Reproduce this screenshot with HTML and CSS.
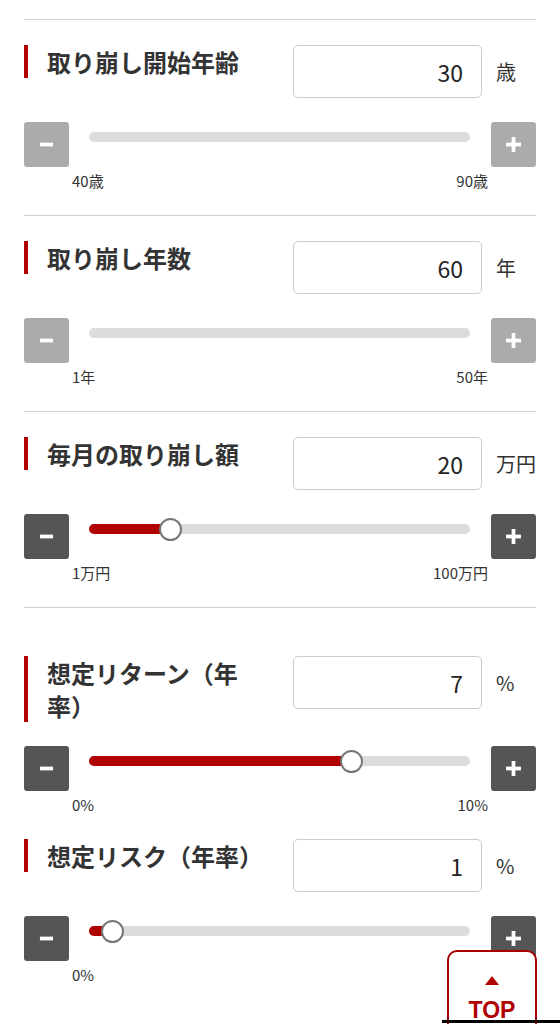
FILE: index.html
```html
<!DOCTYPE html>
<html lang="ja">
<head>
  <meta charset="UTF-8">
  <meta name="viewport" content="width=device-width, initial-scale=1.0">
  <title>取り崩しシミュレーション</title>
  <link rel="stylesheet" href="styles.css">
</head>
<body>
  <main class="sim">
    <div class="group">
      <section class="field">
        <div class="field-head">
          <h3 class="field-title">取り崩し開始年齢</h3>
          <input class="num" type="text" value="30" readonly>
          <span class="unit">歳</span>
        </div>
        <div class="slider">
          <button class="step" disabled><svg viewBox="0 0 16 16"><rect x="1" y="6" width="14" height="4"/></svg></button>
          <div class="track"></div>
          <button class="step" disabled><svg viewBox="0 0 16 16"><rect x="0" y="6" width="16" height="4"/><rect x="6" y="0" width="4" height="16"/></svg></button>
        </div>
        <div class="range-labels"><span>40歳</span><span>90歳</span></div>
      </section>

      <section class="field">
        <div class="field-head">
          <h3 class="field-title">取り崩し年数</h3>
          <input class="num" type="text" value="60" readonly>
          <span class="unit">年</span>
        </div>
        <div class="slider">
          <button class="step" disabled><svg viewBox="0 0 16 16"><rect x="1" y="6" width="14" height="4"/></svg></button>
          <div class="track"></div>
          <button class="step" disabled><svg viewBox="0 0 16 16"><rect x="0" y="6" width="16" height="4"/><rect x="6" y="0" width="4" height="16"/></svg></button>
        </div>
        <div class="range-labels"><span>1年</span><span>50年</span></div>
      </section>

      <section class="field">
        <div class="field-head">
          <h3 class="field-title">毎月の取り崩し額</h3>
          <input class="num" type="text" value="20" readonly>
          <span class="unit">万円</span>
        </div>
        <div class="slider">
          <button class="step"><svg viewBox="0 0 16 16"><rect x="1" y="6" width="14" height="4"/></svg></button>
          <div class="track">
            <div class="fill" style="width: 21.3%"></div>
            <span class="thumb" style="left: 21.3%"></span>
          </div>
          <button class="step"><svg viewBox="0 0 16 16"><rect x="0" y="6" width="16" height="4"/><rect x="6" y="0" width="4" height="16"/></svg></button>
        </div>
        <div class="range-labels"><span>1万円</span><span>100万円</span></div>
      </section>
    </div>

    <div class="group group-plain">
      <section class="field">
        <div class="field-head">
          <h3 class="field-title">想定リターン（年率）</h3>
          <input class="num" type="text" value="7" readonly>
          <span class="unit">%</span>
        </div>
        <div class="slider">
          <button class="step"><svg viewBox="0 0 16 16"><rect x="1" y="6" width="14" height="4"/></svg></button>
          <div class="track">
            <div class="fill" style="width: 68.8%"></div>
            <span class="thumb" style="left: 68.8%"></span>
          </div>
          <button class="step"><svg viewBox="0 0 16 16"><rect x="0" y="6" width="16" height="4"/><rect x="6" y="0" width="4" height="16"/></svg></button>
        </div>
        <div class="range-labels"><span>0%</span><span>10%</span></div>
      </section>

      <section class="field">
        <div class="field-head">
          <h3 class="field-title">想定リスク（年率）</h3>
          <input class="num" type="text" value="1" readonly>
          <span class="unit">%</span>
        </div>
        <div class="slider">
          <button class="step"><svg viewBox="0 0 16 16"><rect x="1" y="6" width="14" height="4"/></svg></button>
          <div class="track">
            <div class="fill" style="width: 6.1%"></div>
            <span class="thumb" style="left: 6.1%"></span>
          </div>
          <button class="step"><svg viewBox="0 0 16 16"><rect x="0" y="6" width="16" height="4"/><rect x="6" y="0" width="4" height="16"/></svg></button>
        </div>
        <div class="range-labels"><span>0%</span><span>30%</span></div>
      </section>
    </div>
  </main>

  <a class="to-top" href="#"><span class="to-top-arrow"></span>TOP</a>
  <div class="bottom-bar"></div>
</body>
</html>
```

FILE: styles.css
```css
body {
  font-family: "Noto Sans CJK JP", "Noto Sans", sans-serif;
  margin: 0;
  padding: 0;
  background-color: #fff;
  color: #333;
}
.sim {
  padding: 19px 24px 0;
}
.group {
  border-top: 1px solid #cfcfcf;
}
.group-plain {
  border-top: none;
  margin-top: 48px;
}
.field {
  padding: 25px 0 24px;
  border-bottom: 1px solid #cfcfcf;
}
.group-plain .field {
  padding-top: 0;
  border-bottom: none;
}
.field-head {
  display: flex;
  align-items: flex-start;
}
.field-title {
  flex: 1;
  margin: 0;
  padding: 0 20px 0 19px;
  border-left: 4px solid #b00000;
  font-size: 24px;
  line-height: 33px;
  font-weight: bold;
  color: #333;
}
.num {
  width: 189px;
  height: 53px;
  box-sizing: border-box;
  border: 1px solid #cccccc;
  border-radius: 5px;
  padding: 0 18px 0 10px;
  text-align: right;
  font-family: "Noto Sans CJK JP", sans-serif;
  font-size: 23px;
  color: #222;
  background: #fff;
}
.unit {
  width: 54px;
  box-sizing: border-box;
  padding-left: 14px;
  line-height: 53px;
  font-size: 20px;
  color: #333;
}
.slider {
  display: flex;
  align-items: flex-start;
  margin-top: 24px;
}
.step {
  width: 45px;
  height: 45px;
  padding: 0;
  border: none;
  border-radius: 3px;
  background: #555;
  display: flex;
  align-items: center;
  justify-content: center;
}
.step:disabled {
  background: #ababab;
}
.step svg {
  width: 15px;
  height: 15px;
  fill: #fff;
}
.track {
  flex: 1;
  position: relative;
  height: 10px;
  margin: 10px 21px 0 20px;
  border-radius: 5px;
  background: #dcdcdc;
}
.fill {
  height: 100%;
  border-radius: 5px 0 0 5px;
  background: #b00000;
}
.thumb {
  position: absolute;
  top: 50%;
  width: 23px;
  height: 23px;
  box-sizing: border-box;
  margin: -11.5px 0 0 -11.5px;
  border: 2px solid #777;
  border-radius: 50%;
  background: #fff;
}
.range-labels {
  display: flex;
  justify-content: space-between;
  margin-top: 4px;
  padding: 0 48px;
  font-size: 15px;
  line-height: 20px;
  color: #333;
}
.to-top {
  position: fixed;
  right: 23px;
  bottom: -16px;
  width: 90px;
  height: 90px;
  box-sizing: border-box;
  border: 2px solid #a80000;
  border-radius: 10px;
  background: #fff;
  color: #b00000;
  text-decoration: none;
  font-family: "Liberation Sans", Arial, sans-serif;
  font-weight: bold;
  font-size: 23px;
  text-align: center;
  padding-top: 24px;
  line-height: 30px;
}
.to-top-arrow {
  display: block;
  width: 0;
  height: 0;
  margin: 0 auto 10px;
  border-left: 7.5px solid transparent;
  border-right: 7.5px solid transparent;
  border-bottom: 9px solid #b00000;
}
.bottom-bar {
  position: fixed;
  left: 442px;
  right: 0;
  bottom: 1px;
  height: 3px;
  background: #000;
}
```
